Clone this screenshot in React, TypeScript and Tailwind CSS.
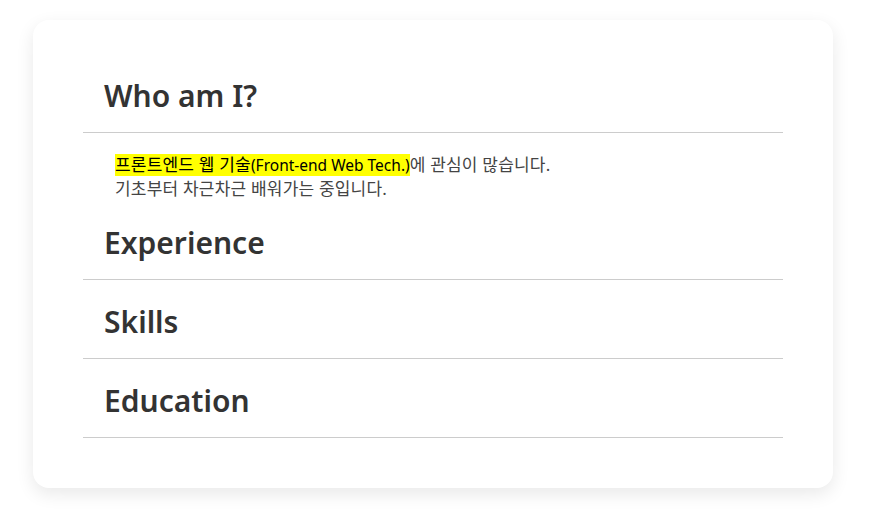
import React from "react";

const sections = ["Experience", "Skills", "Education"];

// Korean runs are set slightly larger to match the wider system Korean font
const Ko: React.FC<{ children: React.ReactNode }> = ({ children }) => (
  <span className="text-[17px] tracking-[0.2px]">{children}</span>
);

const App: React.FC = () => {
  return (
    <div
      className="min-h-screen bg-white pt-[20px] pl-[33px]"
      style={{ fontFamily: '"Noto Sans", "Noto Sans CJK KR", sans-serif' }}
    >
      <div className="w-[800px] rounded-2xl bg-white px-[50px] pt-[34px] pb-[50px] shadow-[0_6px_18px_rgba(0,0,0,0.09)]">
        {/* Who am I */}
        <div className="border-b border-[#cccccc] h-[79px] flex items-center pl-[21px] pt-[5px]">
          <h2 className="text-[30px] font-semibold text-[#333333] leading-none">Who am I?</h2>
        </div>
        <div className="pt-[20px] pl-[32px] text-[15.5px] leading-[24px] text-[#444444]">
          <p>
            <mark className="bg-[#ffff00] text-black">
              <Ko>프론트엔드 웹 기술</Ko>(Front-end Web Tech.)
            </mark>
            <Ko>에 관심이 많습니다.</Ko>
          </p>
          <p>
            <Ko>기초부터 차근차근 배워가는 중입니다.</Ko>
          </p>
        </div>

        {sections.map((title) => (
          <div key={title} className="border-b border-[#cccccc] h-[79px] flex items-center pl-[21px] pt-[5px]">
            <h2 className="text-[30px] font-semibold text-[#333333] leading-none">{title}</h2>
          </div>
        ))}
      </div>
    </div>
  );
};

export default App;
